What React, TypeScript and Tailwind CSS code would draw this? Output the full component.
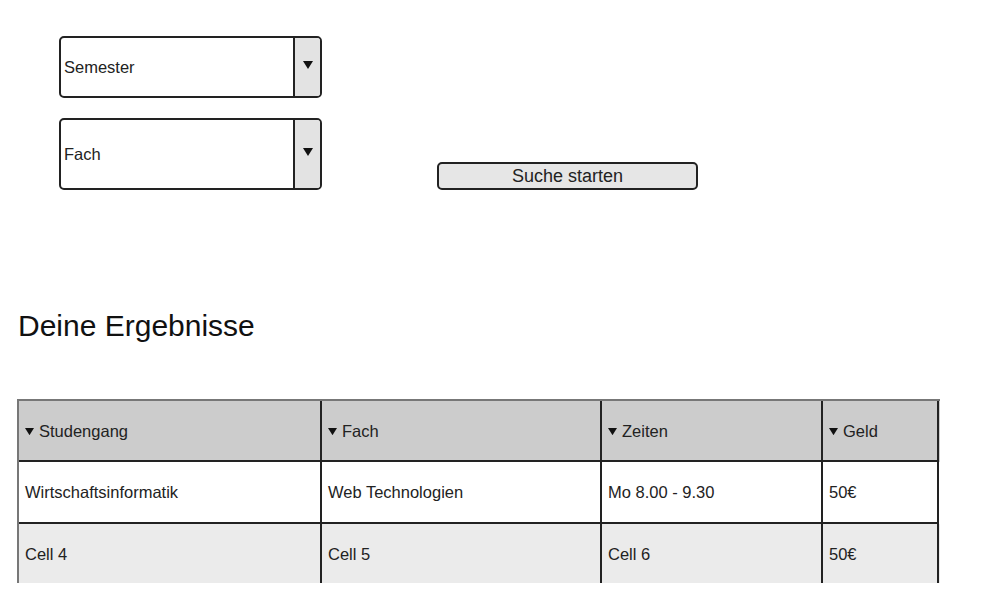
import React from "react";

const Tri = ({ size = 9 }: { size?: number }) => (
  <svg width={size} height={size * 0.8} viewBox="0 0 10 8" className="inline-block">
    <path d="M0 0 L10 0 L5 8 Z" fill="#111" />
  </svg>
);

const Dropdown = ({ label, h }: { label: string; h: string }) => (
  <div className={`flex w-[263px] ${h} rounded-[5px] border-2 border-[#222] overflow-hidden bg-white`}>
    <div className="flex flex-1 items-center pl-[3px] pt-[1px] text-[16.5px] text-[#222]">{label}</div>
    <div className="flex w-[27px] items-center justify-center border-l-2 border-[#222] bg-[#e3e3e3] pb-[4px]">
      <Tri size={10} />
    </div>
  </div>
);

const headers = ["Studengang", "Fach", "Zeiten", "Geld"];
const rows = [
  { bg: "bg-white", cells: ["Wirtschaftsinformatik", "Web Technologien", "Mo 8.00 - 9.30", "50€"] },
  { bg: "bg-[#ebebeb]", cells: ["Cell 4", "Cell 5", "Cell 6", "50€"] },
];
const widths = ["w-[303px]", "w-[280px]", "w-[221px]", "w-[116px]"];

export default function App() {
  return (
    <div className="w-[988px] h-[612px] bg-white overflow-hidden" style={{ fontFamily: '"Liberation Sans", Arial, sans-serif' }}>
      <div className="flex items-end pl-[59px] pt-[36px]">
        <div className="flex flex-col gap-[20px]">
          <Dropdown label="Semester" h="h-[62px]" />
          <Dropdown label="Fach" h="h-[72px]" />
        </div>
        <button className="ml-[115px] flex h-[28px] w-[261px] items-center justify-center rounded-[5px] border-2 border-[#222] bg-[#e6e6e6] pt-[1px] text-[18px] text-[#222]">
          Suche starten
        </button>
      </div>
      <h1 className="mt-[119px] ml-[18px] text-[30px] leading-[34px] text-[#111]">Deine Ergebnisse</h1>
      <div className="mt-[56px] ml-[17px] w-[923px]">
        <div className="flex h-[63px] bg-[#cccccc] border-t-2 border-l-2 border-[#777]">
          {headers.map((h, i) => (
            <div
              key={h}
              className={`${widths[i]} flex items-center gap-[5px] pl-[6px] pt-[2px] text-[16.5px] text-[#222] border-b-2 border-r-2 border-[#222]`}
            >
              <Tri size={9} />
              <span>{h}</span>
            </div>
          ))}
        </div>
        {rows.map((r, ri) => (
          <div key={ri} className={`flex ${ri === 0 ? "h-[62px]" : "h-[59px]"} ${r.bg} border-l-2 border-[#777]`}>
            {r.cells.map((c, i) => (
              <div
                key={i}
                className={`${widths[i]} flex items-center pl-[6px] pt-[1px] text-[16.5px] text-[#222] border-r-2 border-[#222] ${ri === 0 ? "border-b-2" : ""}`}
              >
                {c}
              </div>
            ))}
          </div>
        ))}
      </div>
    </div>
  );
}
